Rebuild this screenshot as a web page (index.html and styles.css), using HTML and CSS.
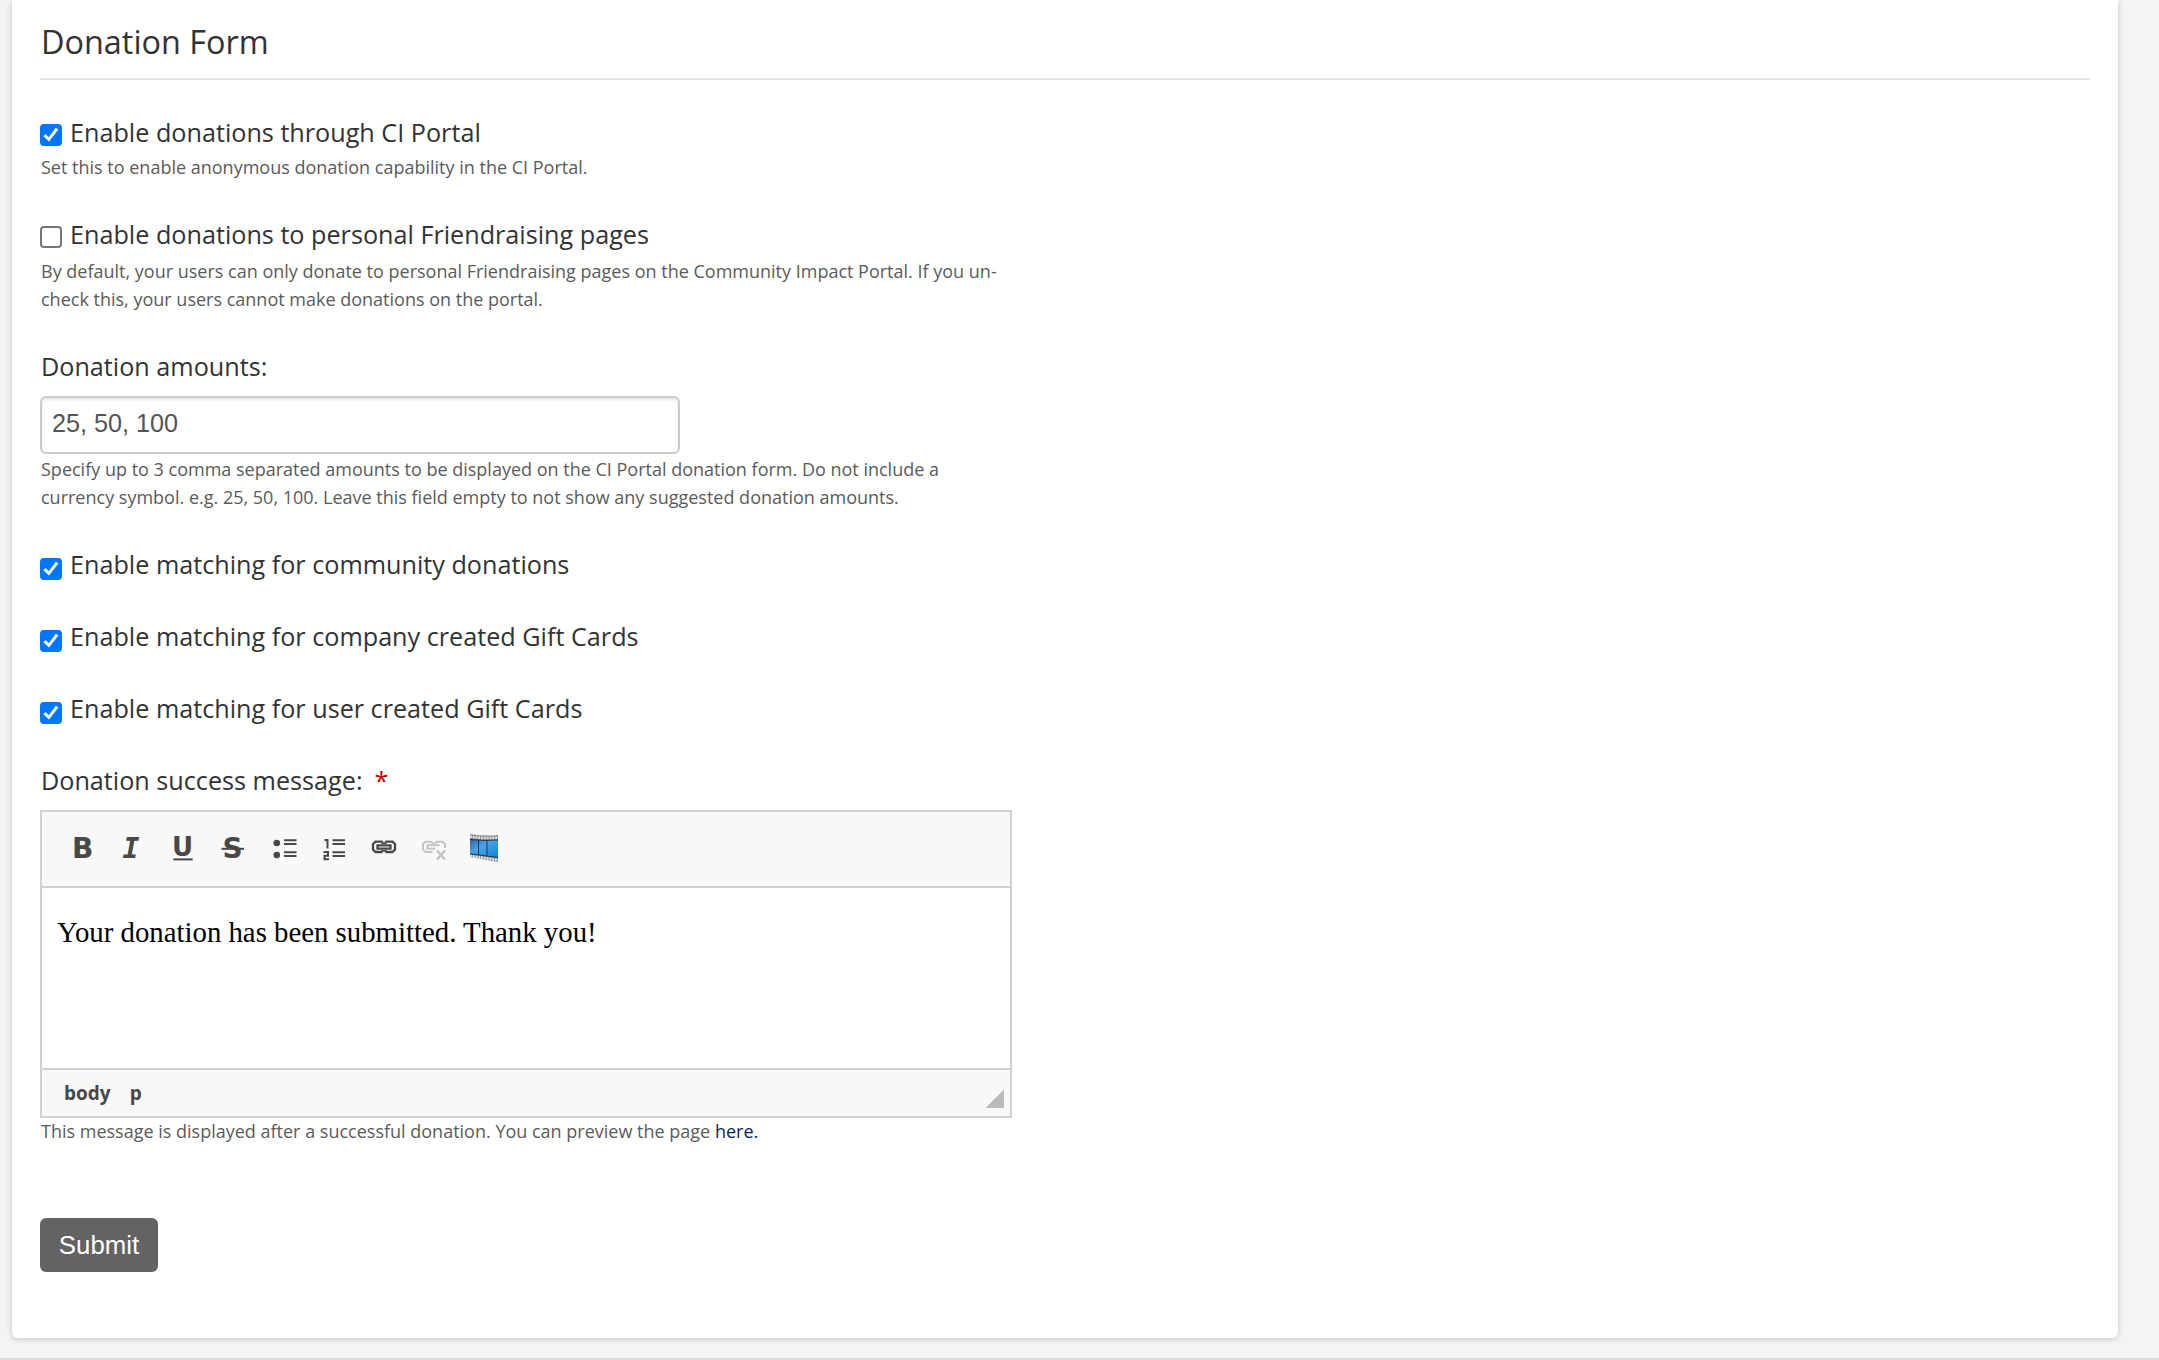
FILE: index.html
```
<!DOCTYPE html>
<html lang="en">
<head>
  <meta charset="UTF-8" />
  <title>Donation Form</title>
  <link rel="stylesheet" href="styles.css">
</head>
<body>

  <div class="card">
    <h2>Donation Form</h2>

    <form class="donation-form">
      <div class="row">
        <label class="check"><input type="checkbox" checked><span>Enable donations through CI Portal</span></label>
        <p class="help">Set this to enable anonymous donation capability in the CI Portal.</p>
      </div>

      <div class="row row-portal">
        <label class="check"><input type="checkbox"><span>Enable donations to personal Friendraising pages</span></label>
        <p class="help">By default, your users can only donate to personal Friendraising pages on the Community Impact Portal. If you un-<br>check this, your users cannot make donations on the portal.</p>
      </div>

      <div class="row">
        <label class="field-label" for="amounts">Donation amounts:</label>
        <input class="text-input" id="amounts" type="text" value="25, 50, 100">
        <p class="help help-field">Specify up to 3 comma separated amounts to be displayed on the CI Portal donation form. Do not include a<br>currency symbol. e.g. 25, 50, 100. Leave this field empty to not show any suggested donation amounts.</p>
      </div>

      <div class="row matching">
        <label class="check"><input type="checkbox" checked><span>Enable matching for community donations</span></label>
        <label class="check"><input type="checkbox" checked><span>Enable matching for company created Gift Cards</span></label>
        <label class="check"><input type="checkbox" checked><span>Enable matching for user created Gift Cards</span></label>
      </div>

      <div class="row">
        <div class="field-label">Donation success message: <span class="required">*</span></div>
        <div class="editor">
          <div class="toolbar">
            <svg class="tool" viewBox="0 0 32 32"><text x="4.1" y="26.4" class="g">B</text></svg>
            <svg class="tool" viewBox="0 0 32 32"><text x="4.4" y="26.4" class="g g-slab">I</text></svg>
            <svg class="tool" viewBox="0 0 32 32"><text x="4.1" y="24" class="g g-u">U</text><path d="M5.3 27.4h19.4" stroke-width="2"/></svg>
            <svg class="tool" viewBox="0 0 32 32"><text x="4.5" y="26.4" class="g">S</text><path d="M3.5 16.8H26" stroke-width="2"/></svg>
            <svg class="tool" viewBox="0 0 32 32">
              <circle cx="8.8" cy="11" r="3.3"/><circle cx="8.8" cy="23" r="3.3"/>
              <path d="M16 8.300h12.500M16 12h12.500M16 20.300h12.500M16 24h12.500" stroke-width="2"/>
            </svg>
            <svg class="tool" viewBox="0 0 32 32">
              <path d="M6.500 8h3v8.500M5.500 20h4.500v3.700H6.500v3.500h4.500" fill="none" stroke-width="2"/>
              <path d="M14.500 8.300H27M14.500 12H27M14.500 20.300H27M14.500 24H27" stroke-width="2"/>
            </svg>
            <svg class="tool" viewBox="0 0 32 32">
              <g fill="none" stroke-width="2.300">
                <path d="M15.500 12 13.500 9.700H7.500L5 12v5.500l2.500 2.500h6l2-2M16.500 12 18.500 9.700h6L27 12v5.500L24.500 20h-6l-2-2"/>
                <path d="M9.500 13.300h13v3.400h-13z"/>
              </g>
            </svg>
            <svg class="tool off" viewBox="0 0 32 32">
              <g fill="none" stroke-width="2">
                <path d="M15.500 12 13.500 9.700H7.500L5 12v5.500L7.500 20h7M16.500 12 18.500 9.700h6L27 12v4M17 16.700H9.500v-3.400h12"/>
                <path d="m19 18.500 8 9M27 18.500l-8 9" stroke-width="2.600"/>
              </g>
            </svg>
            <svg class="tool film" viewBox="0 0 32 32">
              <defs>
                <linearGradient id="film" x1="0" y1="0" x2="1" y2="1">
                  <stop offset="0" stop-color="#2d62a8"/><stop offset=".4" stop-color="#4aa3e4"/><stop offset="1" stop-color="#0a86d6"/>
                </linearGradient>
              </defs>
              <path d="M2 2q14 2.500 28 1v27L2 25z" fill="#8a8a8a" stroke="none"/>
              <path d="M2 7.500q14 1.500 28 .5v17.500L2 22z" fill="url(#film)" stroke="none"/>
              <path d="M2 7.500q14 1.500 28 .5M2 21.800l28 3.700M10.500 8v15M19 8.500V24" fill="none" stroke="#1c3550" stroke-width="1"/>
              <path d="M2 4.500q14 2.500 28 1M2 24l28 4" fill="none" stroke="#e6e6e6" stroke-width="2.600" stroke-dasharray="1.800 1"/>
            </svg>
          </div>
          <div class="content"><p>Your donation has been submitted. Thank you!</p></div>
          <div class="status">
            <span>body</span><span>p</span>
            <i class="resizer"></i>
          </div>
        </div>
        <p class="help help-editor">This message is displayed after a successful donation. You can preview the page <a href="#">here.</a></p>
      </div>

      <button class="submit" type="button">Submit</button>
    </form>
  </div>

</body>
</html>
```
FILE: styles.css
```
* { box-sizing: border-box; }
body {
  margin: 0;
  height: 1360px;
  padding: 0 41px 0 12px;
  background: #f4f4f4;
  border-bottom: 2px solid #ddd;
  font-family: "Open Sans", sans-serif;
  color: #333;
}
.card {
  height: 1338px;
  padding: 0 28px;
  background: #fff;
  border-radius: 0 0 6px 6px;
  box-shadow: 0 1px 6px rgba(0,0,0,0.2);
}
h2 {
  margin: 0 0 34px;
  height: 80px;
  padding: 19px 0 0 1px;
  border-bottom: 2px solid #e4e4e4;
  font-size: 32.4px;
  font-weight: 400;
  line-height: 44px;
}
.row { margin-bottom: 35px; }
.check, .field-label {
  display: flex;
  font-size: 25.2px;
  line-height: 36px;
}
.field-label { padding-left: 1px; }
.check input {
  appearance: none;
  width: 22px;
  height: 22px;
  margin: 10px 8px 0 0;
  border: 2px solid #767676;
  border-radius: 4px;
  background: #fff;
}
.check input:checked {
  border: 0;
  background: #0075ff;
}
.check input:checked::after {
  content: "";
  display: block;
  width: 22px;
  height: 22px;
  background: #fff;
  clip-path: polygon(3.4px 12.2px, 5.6px 10px, 8.7px 13.3px, 15.8px 3.8px, 18.4px 5.6px, 9px 17.6px);
}
.help {
  margin: 3px 0 0;
  padding-left: 1px;
  color: #5b5b5b;
  font-size: 18px;
  line-height: 28px;
  white-space: nowrap;
}
.row-portal .help { margin-top: 5px; }
.help.help-field { margin-top: 1px; }
.help.help-editor { margin-top: -1px; }
.help a { color: #0b1f66; text-decoration: none; }
.matching {
  display: flex;
  flex-direction: column;
  gap: 36px;
  margin-bottom: 36px;
}
.matching input { margin-top: 12px; }
.required { margin-left: 12px; color: #c00; }
.text-input {
  display: block;
  width: 640px;
  height: 58px;
  margin-top: 12px;
  padding: 0 10px 3px;
  border: 2px solid #ccc;
  border-radius: 6px;
  box-shadow: inset 0 2px 3px rgba(0,0,0,0.1);
  color: #555;
  font: 25.2px "Liberation Sans", sans-serif;
}
.editor {
  width: 972px;
  height: 308px;
  margin-top: 12px;
  display: flex;
  flex-direction: column;
  border: 2px solid #d1d1d1;
}
.toolbar {
  display: flex;
  gap: 18px;
  height: 76px;
  padding: 20px 0 0 26px;
  background: #f8f8f8;
  border-bottom: 2px solid #d1d1d1;
}
.tool {
  width: 32px;
  height: 32px;
  overflow: visible;
  fill: #484848;
  stroke: #484848;
}
.tool text, .tool circle { stroke: none; }
.tool.off { stroke: #c4c4c4; }
.g { font: bold 28px "DejaVu Sans", sans-serif; }
.g-u { font-size: 26px; }
.g-slab { font: italic bold 28px "DejaVu Sans Mono", monospace; }
.content { flex: 1; padding: 27px 15px; color: #000; font: 28.8px/34px "Liberation Serif", serif; }
.content p { margin: 0; }
.status {
  display: flex;
  gap: 19px;
  height: 48px;
  padding: 10px 6px 0 22px;
  background: #f8f8f8;
  border-top: 2px solid #d1d1d1;
  color: #484848;
  font-size: 19px;
  font-weight: 700;
  line-height: 26px;
}
.resizer {
  width: 18px;
  height: 18px;
  margin: 10px 0 0 auto;
  background: linear-gradient(135deg, transparent 50%, #bababa 50%);
}
.submit {
  display: block;
  width: 118px;
  height: 54px;
  margin-top: 73px;
  padding: 0;
  border: 0;
  border-radius: 6px;
  background: #636363;
  color: #fff;
  font: 25.8px "Liberation Sans", sans-serif;
}
```
